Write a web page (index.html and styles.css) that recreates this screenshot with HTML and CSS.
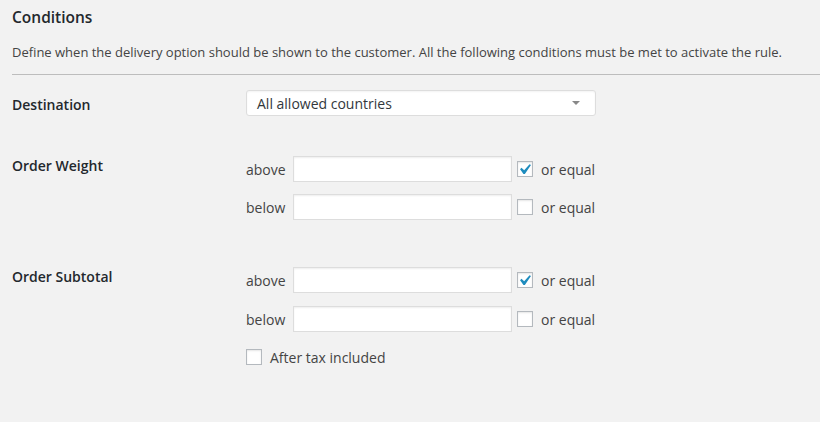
FILE: index.html
```html
<!DOCTYPE html>
<html>
<head>
  <title>Conditions</title>
  <link rel="stylesheet" href="styles.css">
</head>
<body>

  <!--SECTION HEADER-->
  <h2 class="section-title">Conditions</h2>
  <p class="section-desc">Define when the delivery option should be shown to the customer. All the following conditions must be met to activate the rule.</p>
  <hr class="section-rule">

  <!--DESTINATION-->
  <div class="field-row row-destination">
    <div class="field-label label-destination">Destination</div>
    <div class="field-controls">
      <div class="fake-select">
        <span>All allowed countries</span>
        <span class="select-arrow"></span>
      </div>
    </div>
  </div>

  <!--ORDER WEIGHT-->
  <div class="field-row row-weight">
    <div class="field-label">Order Weight</div>
    <div class="field-controls">
      <div class="bound-row">
        <span class="bound-label">above</span>
        <input class="bound-input" type="text">
        <span class="check-box checked"><svg viewBox="0 0 20 20"><path d="M14.83 4.89l1.34.94-5.81 8.38H9.02L5.78 9.67l1.34-1.25 2.57 2.4z"/></svg></span>
        <span class="check-text">or equal</span>
      </div>
      <div class="bound-row">
        <span class="bound-label">below</span>
        <input class="bound-input" type="text">
        <span class="check-box"></span>
        <span class="check-text">or equal</span>
      </div>
    </div>
  </div>

  <!--ORDER SUBTOTAL-->
  <div class="field-row row-subtotal">
    <div class="field-label">Order Subtotal</div>
    <div class="field-controls subtotal-controls">
      <div class="bound-row">
        <span class="bound-label">above</span>
        <input class="bound-input" type="text">
        <span class="check-box checked"><svg viewBox="0 0 20 20"><path d="M14.83 4.89l1.34.94-5.81 8.38H9.02L5.78 9.67l1.34-1.25 2.57 2.4z"/></svg></span>
        <span class="check-text">or equal</span>
      </div>
      <div class="bound-row">
        <span class="bound-label">below</span>
        <input class="bound-input" type="text">
        <span class="check-box"></span>
        <span class="check-text">or equal</span>
      </div>
      <div class="tax-row">
        <span class="check-box"></span>
        <span class="tax-text">After tax included</span>
      </div>
    </div>
  </div>

</body>
</html>
```

FILE: styles.css
```css
body {
  background-color: #f2f2f2;
  margin: 0;
  padding: 0 12px;
  font-family: "Open Sans", "DejaVu Sans", sans-serif;
  font-size: 14px;
  color: #444;
}
.section-title {
  margin: 0;
  padding-top: 7px;
  font-size: 15.5px;
  line-height: 21px;
  font-weight: 600;
  color: #23282d;
}
.section-desc {
  margin: 14px 0 0;
  font-size: 13px;
  line-height: 20px;
  white-space: nowrap;
}
.section-rule {
  margin: 12px -12px 0 0;
  border: none;
  border-top: 1px solid #bdbdbd;
  height: 0;
}
/* Rows of the form */
.field-row {
  display: flex;
}
.row-destination {
  margin-top: 15px;
}
.row-weight {
  margin-top: 40px;
}
.row-subtotal {
  margin-top: 47px;
}
.field-label {
  width: 234px;
  flex-shrink: 0;
  font-weight: 600;
  color: #23282d;
  line-height: 20px;
}
.label-destination {
  padding-top: 5px;
}
.field-controls {
  display: flex;
  flex-direction: column;
  gap: 12px;
}
.subtotal-controls {
  gap: 13px;
}
/* Select box */
.fake-select {
  width: 350px;
  height: 26px;
  box-sizing: border-box;
  display: flex;
  align-items: center;
  justify-content: space-between;
  padding: 0 15px 0 10px;
  background-color: #fff;
  border: 1px solid #ddd;
  border-radius: 3px;
  box-shadow: inset 0 1px 2px rgba(0, 0, 0, 0.05);
  color: #32373c;
}
.select-arrow {
  width: 0;
  height: 0;
  border-left: 4px solid transparent;
  border-right: 4px solid transparent;
  border-top: 4px solid #888;
}
/* Above / below rows */
.bound-row {
  display: flex;
  align-items: center;
  height: 26px;
}
.bound-label {
  width: 47px;
}
.bound-input {
  width: 219px;
  height: 26px;
  box-sizing: border-box;
  margin: 0;
  background-color: #fff;
  border: 1px solid #ddd;
  box-shadow: inset 0 1px 2px rgba(0, 0, 0, 0.07);
}
.check-box {
  width: 16px;
  height: 16px;
  box-sizing: border-box;
  margin-left: 5px;
  position: relative;
  background-color: #fff;
  border: 1px solid #b4b9be;
  box-shadow: inset 0 1px 2px rgba(0, 0, 0, 0.1);
}
.check-box svg {
  position: absolute;
  left: -4px;
  top: -3px;
  width: 21px;
  height: 21px;
  fill: #1e8cbe;
}
.check-text {
  margin-left: 8px;
}
/* After tax */
.tax-row {
  display: flex;
  align-items: center;
  height: 26px;
  margin-top: -1px;
}
.tax-row .check-box {
  margin-left: 0;
}
.tax-text {
  margin-left: 8px;
}
```
